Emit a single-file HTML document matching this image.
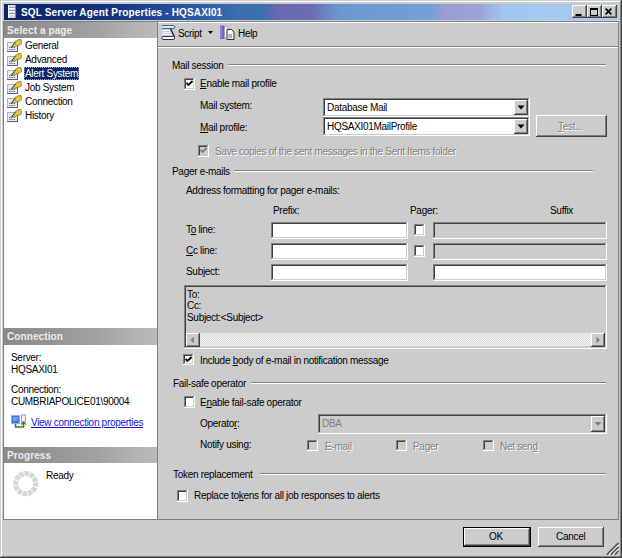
<!DOCTYPE html><html><head><meta charset="utf-8"><style>
html,body{margin:0;padding:0;}
body{width:622px;height:558px;position:relative;overflow:hidden;background:#cccccc;font-family:'Liberation Sans', sans-serif;}
.t{position:absolute;white-space:nowrap;font-family:'Liberation Sans', sans-serif;font-size:10px;line-height:12px;}
u{text-decoration:underline;}
</style></head><body>
<div style="position:absolute;left:0px;top:0px;width:622px;height:558px;background:#404040"></div>
<div style="position:absolute;left:0px;top:0px;width:621px;height:557px;background:#cccccc"></div>
<div style="position:absolute;left:1px;top:1px;width:620px;height:556px;background:#808080"></div>
<div style="position:absolute;left:1px;top:1px;width:619px;height:555px;background:#ffffff"></div>
<div style="position:absolute;left:2px;top:2px;width:618px;height:554px;background:#cccccc"></div>
<div style="position:absolute;left:4px;top:4px;width:614px;height:16px;background:linear-gradient(to right,#0a246a 0px,#12307c 96px,#2650a0 176px,#3a70b0 236px,#3a70b0 258px,#6a68b0 275px,#6a6cb4 306px,#6a98d0 336px,#72a0d6 426px,#9a9cd2 440px,#9ca4d6 476px,#a0c8f0 500px,#a6caf0 614px)"></div>
<div class="t" style="left:21px;top:7px;color:#fff;font-weight:bold;font-size:10px;letter-spacing:0.15px;">SQL Server Agent Properties - HQSAXI01</div>
<svg style="position:absolute;left:8px;top:5px" width="9" height="14"><rect x="0" y="0" width="8" height="13" fill="#d8d8e8"/><path d="M0.5 0v13" stroke="#f8f8ff"/><path d="M7.5 0v13" stroke="#8080a0"/><path d="M1 2.5h6M1 5.5h6M1 8.5h6" stroke="#9898b8"/><path d="M1 3.5h6M1 6.5h6M1 9.5h6" stroke="#ffffff"/></svg>
<div style="position:absolute;left:572px;top:5px;width:15px;height:13px;background:#404040"></div>
<div style="position:absolute;left:572px;top:5px;width:14px;height:12px;background:#ffffff"></div>
<div style="position:absolute;left:573px;top:6px;width:13px;height:11px;background:#808080"></div>
<div style="position:absolute;left:573px;top:6px;width:12px;height:10px;background:#cccccc"></div>
<div style="position:absolute;left:587px;top:5px;width:15px;height:13px;background:#404040"></div>
<div style="position:absolute;left:587px;top:5px;width:14px;height:12px;background:#ffffff"></div>
<div style="position:absolute;left:588px;top:6px;width:13px;height:11px;background:#808080"></div>
<div style="position:absolute;left:588px;top:6px;width:12px;height:10px;background:#cccccc"></div>
<div style="position:absolute;left:602px;top:5px;width:15px;height:13px;background:#404040"></div>
<div style="position:absolute;left:602px;top:5px;width:14px;height:12px;background:#ffffff"></div>
<div style="position:absolute;left:603px;top:6px;width:13px;height:11px;background:#808080"></div>
<div style="position:absolute;left:603px;top:6px;width:12px;height:10px;background:#cccccc"></div>
<svg style="position:absolute;left:572px;top:5px" width="46" height="13"><rect x="3.5" y="9" width="6" height="2" fill="#000"/><rect x="18.5" y="3.5" width="7" height="7" fill="none" stroke="#000" stroke-width="1"/><rect x="18" y="3" width="8" height="2" fill="#000"/><path d="M33.6 3.6 L39.4 9.4 M39.4 3.6 L33.6 9.4" stroke="#000" stroke-width="1.6"/></svg>
<div style="position:absolute;left:3px;top:21px;width:616px;height:1px;background:#808080"></div>
<div style="position:absolute;left:3px;top:519px;width:616px;height:1px;background:#808080"></div>
<div style="position:absolute;left:3px;top:21px;width:1px;height:499px;background:#808080"></div>
<div style="position:absolute;left:157px;top:21px;width:1px;height:499px;background:#808080"></div>
<div style="position:absolute;left:618px;top:21px;width:1px;height:499px;background:#808080"></div>
<div style="position:absolute;left:4px;top:22px;width:153px;height:497px;background:#ffffff"></div>
<div style="position:absolute;left:4px;top:22px;width:153px;height:16px;background:linear-gradient(to right,#8a8a8a 0%,#949494 30%,#a2a2a2 62%,#b2b2b2 84%,#bababa 100%)"></div>
<div class="t" style="left:7px;top:25px;color:#ececec;font-weight:bold;font-size:10px;letter-spacing:0.1px;">Select a page</div>
<svg style="position:absolute;left:7px;top:39px" width="15" height="13"><rect x="0" y="3" width="11" height="10" fill="#e6eaf2"/><path d="M0.5 12.5V3.5H10.5" stroke="#aab2c2" fill="none"/><path d="M0 12.5h11M10.5 3v10" stroke="#586070"/><path d="M2 8.5h6M2 10.5h6" stroke="#6078b0" stroke-dasharray="1.5 0.8"/><path d="M5 7.5 L8.5 2.5 Q10.5 0.3 14 0.5 L14.5 4.5 Q13 6.5 10 6.5 L7.5 8z" fill="#e4c440" stroke="#907420" stroke-width="0.8"/><path d="M4 8.5 L9 2.5" stroke="#282828" stroke-width="1.2" stroke-dasharray="1 0.9"/></svg>
<div class="t" style="left:25px;top:40px;color:#000;font-weight:normal;font-size:10px;letter-spacing:-0.3px;">General</div>
<svg style="position:absolute;left:7px;top:53px" width="15" height="13"><rect x="0" y="3" width="11" height="10" fill="#e6eaf2"/><path d="M0.5 12.5V3.5H10.5" stroke="#aab2c2" fill="none"/><path d="M0 12.5h11M10.5 3v10" stroke="#586070"/><path d="M2 8.5h6M2 10.5h6" stroke="#6078b0" stroke-dasharray="1.5 0.8"/><path d="M5 7.5 L8.5 2.5 Q10.5 0.3 14 0.5 L14.5 4.5 Q13 6.5 10 6.5 L7.5 8z" fill="#e4c440" stroke="#907420" stroke-width="0.8"/><path d="M4 8.5 L9 2.5" stroke="#282828" stroke-width="1.2" stroke-dasharray="1 0.9"/></svg>
<div class="t" style="left:25px;top:54px;color:#000;font-weight:normal;font-size:10px;letter-spacing:-0.3px;">Advanced</div>
<svg style="position:absolute;left:7px;top:67px" width="15" height="13"><rect x="0" y="3" width="11" height="10" fill="#e6eaf2"/><path d="M0.5 12.5V3.5H10.5" stroke="#aab2c2" fill="none"/><path d="M0 12.5h11M10.5 3v10" stroke="#586070"/><path d="M2 8.5h6M2 10.5h6" stroke="#6078b0" stroke-dasharray="1.5 0.8"/><path d="M5 7.5 L8.5 2.5 Q10.5 0.3 14 0.5 L14.5 4.5 Q13 6.5 10 6.5 L7.5 8z" fill="#e4c440" stroke="#907420" stroke-width="0.8"/><path d="M4 8.5 L9 2.5" stroke="#282828" stroke-width="1.2" stroke-dasharray="1 0.9"/></svg>
<div style="position:absolute;left:24px;top:67px;width:55px;height:13px;background:#0a246a"></div>
<div style="position:absolute;left:24px;top:67px;width:53px;height:11px;border:1px dotted #a0a8c0"></div>
<div class="t" style="left:25px;top:68px;color:#fff;font-weight:normal;font-size:10px;letter-spacing:-0.3px;">Alert System</div>
<svg style="position:absolute;left:7px;top:81px" width="15" height="13"><rect x="0" y="3" width="11" height="10" fill="#e6eaf2"/><path d="M0.5 12.5V3.5H10.5" stroke="#aab2c2" fill="none"/><path d="M0 12.5h11M10.5 3v10" stroke="#586070"/><path d="M2 8.5h6M2 10.5h6" stroke="#6078b0" stroke-dasharray="1.5 0.8"/><path d="M5 7.5 L8.5 2.5 Q10.5 0.3 14 0.5 L14.5 4.5 Q13 6.5 10 6.5 L7.5 8z" fill="#e4c440" stroke="#907420" stroke-width="0.8"/><path d="M4 8.5 L9 2.5" stroke="#282828" stroke-width="1.2" stroke-dasharray="1 0.9"/></svg>
<div class="t" style="left:25px;top:82px;color:#000;font-weight:normal;font-size:10px;letter-spacing:-0.3px;">Job System</div>
<svg style="position:absolute;left:7px;top:95px" width="15" height="13"><rect x="0" y="3" width="11" height="10" fill="#e6eaf2"/><path d="M0.5 12.5V3.5H10.5" stroke="#aab2c2" fill="none"/><path d="M0 12.5h11M10.5 3v10" stroke="#586070"/><path d="M2 8.5h6M2 10.5h6" stroke="#6078b0" stroke-dasharray="1.5 0.8"/><path d="M5 7.5 L8.5 2.5 Q10.5 0.3 14 0.5 L14.5 4.5 Q13 6.5 10 6.5 L7.5 8z" fill="#e4c440" stroke="#907420" stroke-width="0.8"/><path d="M4 8.5 L9 2.5" stroke="#282828" stroke-width="1.2" stroke-dasharray="1 0.9"/></svg>
<div class="t" style="left:25px;top:96px;color:#000;font-weight:normal;font-size:10px;letter-spacing:-0.3px;">Connection</div>
<svg style="position:absolute;left:7px;top:109px" width="15" height="13"><rect x="0" y="3" width="11" height="10" fill="#e6eaf2"/><path d="M0.5 12.5V3.5H10.5" stroke="#aab2c2" fill="none"/><path d="M0 12.5h11M10.5 3v10" stroke="#586070"/><path d="M2 8.5h6M2 10.5h6" stroke="#6078b0" stroke-dasharray="1.5 0.8"/><path d="M5 7.5 L8.5 2.5 Q10.5 0.3 14 0.5 L14.5 4.5 Q13 6.5 10 6.5 L7.5 8z" fill="#e4c440" stroke="#907420" stroke-width="0.8"/><path d="M4 8.5 L9 2.5" stroke="#282828" stroke-width="1.2" stroke-dasharray="1 0.9"/></svg>
<div class="t" style="left:25px;top:110px;color:#000;font-weight:normal;font-size:10px;letter-spacing:-0.3px;">History</div>
<div style="position:absolute;left:4px;top:328px;width:153px;height:17px;background:linear-gradient(to right,#8a8a8a 0%,#949494 30%,#a2a2a2 62%,#b2b2b2 84%,#bababa 100%)"></div>
<div class="t" style="left:7px;top:331px;color:#ececec;font-weight:bold;font-size:10px;letter-spacing:0.1px;">Connection</div>
<div class="t" style="left:11px;top:352px;color:#000;font-weight:normal;font-size:10px;letter-spacing:-0.3px;">Server:</div>
<div class="t" style="left:11px;top:364px;color:#000;font-weight:normal;font-size:10px;letter-spacing:-0.3px;">HQSAXI01</div>
<div class="t" style="left:11px;top:384px;color:#000;font-weight:normal;font-size:10px;letter-spacing:-0.3px;">Connection:</div>
<div class="t" style="left:11px;top:396px;color:#000;font-weight:normal;font-size:10px;letter-spacing:-0.3px;">CUMBRIAPOLICE01\90004</div>
<svg style="position:absolute;left:11px;top:414px" width="16" height="15"><rect x="0.5" y="1.5" width="8" height="8" fill="#3a78e0" stroke="#90b0e8"/><path d="M2 4h5M2 6h4" stroke="#a0c8ff"/><rect x="10.5" y="1" width="4" height="7" fill="#f4f0f8" stroke="#a0a0b0"/><path d="M4.5 10 V13 H12.5 V8" stroke="#3a7a20" stroke-width="1.5" fill="none"/><path d="M10 10.5 L12.5 8 L15 10.5" stroke="#3a7a20" stroke-width="1.2" fill="none"/></svg>
<div class="t" style="left:31px;top:417px;color:#1414d0;font-weight:normal;font-size:10px;letter-spacing:-0.3px;"><u>View connection properties</u></div>
<div style="position:absolute;left:4px;top:447px;width:153px;height:16px;background:linear-gradient(to right,#8a8a8a 0%,#949494 30%,#a2a2a2 62%,#b2b2b2 84%,#bababa 100%)"></div>
<div class="t" style="left:7px;top:450px;color:#ececec;font-weight:bold;font-size:10px;letter-spacing:0.1px;">Progress</div>
<svg style="position:absolute;left:13px;top:471px" width="26" height="26"><circle cx="12.7" cy="12.7" r="10" fill="none" stroke="#d6d6d6" stroke-width="5.2" stroke-dasharray="4.3 0.93" transform="rotate(-8 12.7 12.7)"/></svg>
<div class="t" style="left:46px;top:470px;color:#000;font-weight:normal;font-size:10px;letter-spacing:-0.3px;">Ready</div>
<div style="position:absolute;left:158px;top:22px;width:460px;height:1px;background:#ffffff"></div>
<div style="position:absolute;left:158px;top:46px;width:460px;height:1px;background:#808080"></div>
<div style="position:absolute;left:158px;top:47px;width:460px;height:1px;background:#ffffff"></div>
<svg style="position:absolute;left:160px;top:24px" width="17" height="17"><path d="M2 4.5 H10.5 L14.5 13 H2z" fill="#c4d0e6"/><path d="M2.5 6.5h7M2.5 8.5h8M2.5 10.5h9" stroke="#f4f8ff" stroke-width="1"/><path d="M2 1.5 H13 Q15 1.5 15 3 Q15 4.5 13 4.5 H2" fill="#dde4f0" stroke="#5a6478" stroke-width="1"/><path d="M10.5 4.5 L14.5 13" stroke="#202830" stroke-width="1.4"/><path d="M2.5 12.5 H14 Q15.5 14 14 15.5 H2.5 Q1 14 2.5 12.5z" fill="#ffffff" stroke="#303848" stroke-width="1"/></svg>
<div class="t" style="left:178px;top:28px;color:#000;font-weight:normal;font-size:10px;letter-spacing:-0.3px;">Script</div>
<svg style="position:absolute;left:208px;top:31px" width="6" height="4"><path d="M0 0h5l-2.5 3z" fill="#000"/></svg>
<svg style="position:absolute;left:219px;top:24px" width="17" height="17"><path d="M1 1.5 h4.5 v13.5 h-4.5z" fill="#6c64cc"/><path d="M2 2v12" stroke="#a8a4f0" stroke-width="1"/><path d="M5.5 3 h3.5 v11 h-3.5z" fill="#ffffff" stroke="#9a98b8" stroke-width="0.8"/><path d="M8 5.5 h4.5 l2.5 2.5 v7.5 h-7z" fill="#f2f4f8" stroke="#283038" stroke-width="1"/><path d="M9.5 11h3.5M9.5 13h3.5" stroke="#606878"/></svg>
<div class="t" style="left:238px;top:28px;color:#000;font-weight:normal;font-size:10px;letter-spacing:-0.3px;">Help</div>
<div class="t" style="left:172px;top:60px;color:#000;font-weight:normal;font-size:10px;letter-spacing:-0.3px;">Mail session</div>
<div style="position:absolute;left:228px;top:64px;width:378px;height:1px;background:#808080"></div>
<div style="position:absolute;left:228px;top:65px;width:378px;height:1px;background:#ffffff"></div>
<div style="position:absolute;left:184px;top:78px;width:11px;height:12px;background:#ffffff"></div>
<div style="position:absolute;left:184px;top:78px;width:10px;height:11px;background:#808080"></div>
<div style="position:absolute;left:185px;top:79px;width:9px;height:10px;background:#cccccc"></div>
<div style="position:absolute;left:185px;top:79px;width:8px;height:9px;background:#404040"></div>
<div style="position:absolute;left:186px;top:80px;width:7px;height:8px;background:#fff"></div>
<svg style="position:absolute;left:184px;top:78px" width="11" height="12"><path d="M2.5 5 L4.5 7 L8.5 3" stroke="#000" stroke-width="1.8" fill="none"/></svg>
<div class="t" style="left:200px;top:78px;color:#000;font-weight:normal;font-size:10px;letter-spacing:-0.3px;"><u>E</u>nable mail profile</div>
<div class="t" style="left:200px;top:100px;color:#000;font-weight:normal;font-size:10px;letter-spacing:-0.3px;">Mail s<u>y</u>stem:</div>
<div class="t" style="left:200px;top:122px;color:#000;font-weight:normal;font-size:10px;letter-spacing:-0.3px;"><u>M</u>ail profile:</div>
<div style="position:absolute;left:323px;top:98px;width:207px;height:19px;background:#ffffff"></div>
<div style="position:absolute;left:323px;top:98px;width:206px;height:18px;background:#808080"></div>
<div style="position:absolute;left:324px;top:99px;width:205px;height:17px;background:#cccccc"></div>
<div style="position:absolute;left:324px;top:99px;width:204px;height:16px;background:#404040"></div>
<div style="position:absolute;left:325px;top:100px;width:203px;height:15px;background:#fff"></div>
<div class="t" style="left:327px;top:102px;color:#000;font-weight:normal;font-size:10px;letter-spacing:-0.3px;">Database Mail</div>
<div style="position:absolute;left:514px;top:100px;width:14px;height:15px;background:#404040"></div>
<div style="position:absolute;left:514px;top:100px;width:13px;height:14px;background:#ffffff"></div>
<div style="position:absolute;left:515px;top:101px;width:12px;height:13px;background:#808080"></div>
<div style="position:absolute;left:515px;top:101px;width:11px;height:12px;background:#cccccc"></div>
<svg style="position:absolute;left:514px;top:100px;overflow:visible" width="14" height="15"><path d="M3.5 5.5 h7 l-3.5 4z" fill="#000"/></svg>
<div style="position:absolute;left:323px;top:117px;width:207px;height:19px;background:#ffffff"></div>
<div style="position:absolute;left:323px;top:117px;width:206px;height:18px;background:#808080"></div>
<div style="position:absolute;left:324px;top:118px;width:205px;height:17px;background:#cccccc"></div>
<div style="position:absolute;left:324px;top:118px;width:204px;height:16px;background:#404040"></div>
<div style="position:absolute;left:325px;top:119px;width:203px;height:15px;background:#fff"></div>
<div class="t" style="left:327px;top:121px;color:#000;font-weight:normal;font-size:10px;letter-spacing:-0.3px;">HQSAXI01MailProfile</div>
<div style="position:absolute;left:514px;top:119px;width:14px;height:15px;background:#404040"></div>
<div style="position:absolute;left:514px;top:119px;width:13px;height:14px;background:#ffffff"></div>
<div style="position:absolute;left:515px;top:120px;width:12px;height:13px;background:#808080"></div>
<div style="position:absolute;left:515px;top:120px;width:11px;height:12px;background:#cccccc"></div>
<svg style="position:absolute;left:514px;top:119px;overflow:visible" width="14" height="15"><path d="M3.5 5.5 h7 l-3.5 4z" fill="#000"/></svg>
<div style="position:absolute;left:536px;top:115px;width:71px;height:22px;background:#404040"></div>
<div style="position:absolute;left:536px;top:115px;width:70px;height:21px;background:#ffffff"></div>
<div style="position:absolute;left:537px;top:116px;width:69px;height:20px;background:#808080"></div>
<div style="position:absolute;left:537px;top:116px;width:68px;height:19px;background:#cccccc"></div>
<div class="t" style="left:558px;top:121px;color:#808080;font-weight:normal;font-size:10px;letter-spacing:-0.3px;text-shadow:1px 1px 0 #fff"><u>T</u>est...</div>
<div style="position:absolute;left:198px;top:145px;width:11px;height:12px;background:#ffffff"></div>
<div style="position:absolute;left:198px;top:145px;width:10px;height:11px;background:#808080"></div>
<div style="position:absolute;left:199px;top:146px;width:9px;height:10px;background:#cccccc"></div>
<div style="position:absolute;left:199px;top:146px;width:8px;height:9px;background:#404040"></div>
<div style="position:absolute;left:200px;top:147px;width:7px;height:8px;background:#cccccc"></div>
<svg style="position:absolute;left:198px;top:145px" width="11" height="12"><path d="M2.5 5 L4.5 7 L8.5 3" stroke="#808080" stroke-width="1.8" fill="none"/></svg>
<div class="t" style="left:215px;top:146px;color:#808080;font-weight:normal;font-size:10px;letter-spacing:-0.3px;text-shadow:1px 1px 0 #fff">Save copies of the sent messages in the Sent Items folder</div>
<div class="t" style="left:172px;top:166px;color:#000;font-weight:normal;font-size:10px;letter-spacing:-0.3px;">Pager e-mails</div>
<div style="position:absolute;left:234px;top:170px;width:359px;height:1px;background:#808080"></div>
<div style="position:absolute;left:234px;top:171px;width:359px;height:1px;background:#ffffff"></div>
<div class="t" style="left:186px;top:185px;color:#000;font-weight:normal;font-size:10px;letter-spacing:-0.3px;">Address formatting for pager e-mails:</div>
<div class="t" style="left:273px;top:205px;color:#000;font-weight:normal;font-size:10px;letter-spacing:-0.3px;">Prefix:</div>
<div class="t" style="left:410px;top:205px;color:#000;font-weight:normal;font-size:10px;letter-spacing:-0.3px;">Pager:</div>
<div class="t" style="left:550px;top:205px;color:#000;font-weight:normal;font-size:10px;letter-spacing:-0.3px;">Suffix</div>
<div class="t" style="left:186px;top:224px;color:#000;font-weight:normal;font-size:10px;letter-spacing:-0.3px;">T<u>o</u> line:</div>
<div class="t" style="left:186px;top:245px;color:#000;font-weight:normal;font-size:10px;letter-spacing:-0.3px;"><u>C</u>c line:</div>
<div class="t" style="left:186px;top:266px;color:#000;font-weight:normal;font-size:10px;letter-spacing:-0.3px;">Subject:</div>
<div style="position:absolute;left:271px;top:222px;width:137px;height:17px;background:#ffffff"></div>
<div style="position:absolute;left:271px;top:222px;width:136px;height:16px;background:#808080"></div>
<div style="position:absolute;left:272px;top:223px;width:135px;height:15px;background:#cccccc"></div>
<div style="position:absolute;left:272px;top:223px;width:134px;height:14px;background:#404040"></div>
<div style="position:absolute;left:273px;top:224px;width:133px;height:13px;background:#fff"></div>
<div style="position:absolute;left:433px;top:222px;width:174px;height:17px;background:#ffffff"></div>
<div style="position:absolute;left:433px;top:222px;width:173px;height:16px;background:#808080"></div>
<div style="position:absolute;left:434px;top:223px;width:172px;height:15px;background:#cccccc"></div>
<div style="position:absolute;left:434px;top:223px;width:171px;height:14px;background:#404040"></div>
<div style="position:absolute;left:435px;top:224px;width:170px;height:13px;background:#cccccc"></div>
<div style="position:absolute;left:271px;top:243px;width:137px;height:17px;background:#ffffff"></div>
<div style="position:absolute;left:271px;top:243px;width:136px;height:16px;background:#808080"></div>
<div style="position:absolute;left:272px;top:244px;width:135px;height:15px;background:#cccccc"></div>
<div style="position:absolute;left:272px;top:244px;width:134px;height:14px;background:#404040"></div>
<div style="position:absolute;left:273px;top:245px;width:133px;height:13px;background:#fff"></div>
<div style="position:absolute;left:433px;top:243px;width:174px;height:17px;background:#ffffff"></div>
<div style="position:absolute;left:433px;top:243px;width:173px;height:16px;background:#808080"></div>
<div style="position:absolute;left:434px;top:244px;width:172px;height:15px;background:#cccccc"></div>
<div style="position:absolute;left:434px;top:244px;width:171px;height:14px;background:#404040"></div>
<div style="position:absolute;left:435px;top:245px;width:170px;height:13px;background:#cccccc"></div>
<div style="position:absolute;left:271px;top:264px;width:137px;height:17px;background:#ffffff"></div>
<div style="position:absolute;left:271px;top:264px;width:136px;height:16px;background:#808080"></div>
<div style="position:absolute;left:272px;top:265px;width:135px;height:15px;background:#cccccc"></div>
<div style="position:absolute;left:272px;top:265px;width:134px;height:14px;background:#404040"></div>
<div style="position:absolute;left:273px;top:266px;width:133px;height:13px;background:#fff"></div>
<div style="position:absolute;left:433px;top:264px;width:174px;height:17px;background:#ffffff"></div>
<div style="position:absolute;left:433px;top:264px;width:173px;height:16px;background:#808080"></div>
<div style="position:absolute;left:434px;top:265px;width:172px;height:15px;background:#cccccc"></div>
<div style="position:absolute;left:434px;top:265px;width:171px;height:14px;background:#404040"></div>
<div style="position:absolute;left:435px;top:266px;width:170px;height:13px;background:#fff"></div>
<div style="position:absolute;left:414px;top:224px;width:11px;height:12px;background:#ffffff"></div>
<div style="position:absolute;left:414px;top:224px;width:10px;height:11px;background:#808080"></div>
<div style="position:absolute;left:415px;top:225px;width:9px;height:10px;background:#cccccc"></div>
<div style="position:absolute;left:415px;top:225px;width:8px;height:9px;background:#404040"></div>
<div style="position:absolute;left:416px;top:226px;width:7px;height:8px;background:#fff"></div>
<div style="position:absolute;left:414px;top:245px;width:11px;height:12px;background:#ffffff"></div>
<div style="position:absolute;left:414px;top:245px;width:10px;height:11px;background:#808080"></div>
<div style="position:absolute;left:415px;top:246px;width:9px;height:10px;background:#cccccc"></div>
<div style="position:absolute;left:415px;top:246px;width:8px;height:9px;background:#404040"></div>
<div style="position:absolute;left:416px;top:247px;width:7px;height:8px;background:#fff"></div>
<div style="position:absolute;left:184px;top:285px;width:423px;height:64px;background:#ffffff"></div>
<div style="position:absolute;left:184px;top:285px;width:422px;height:63px;background:#808080"></div>
<div style="position:absolute;left:185px;top:286px;width:421px;height:62px;background:#cccccc"></div>
<div style="position:absolute;left:185px;top:286px;width:420px;height:61px;background:#404040"></div>
<div style="position:absolute;left:186px;top:287px;width:419px;height:60px;background:#cccccc"></div>
<div class="t" style="left:187px;top:289px;color:#000;font-weight:normal;font-size:10px;letter-spacing:-0.3px;">To:</div>
<div class="t" style="left:187px;top:300px;color:#000;font-weight:normal;font-size:10px;letter-spacing:-0.3px;">Cc:</div>
<div class="t" style="left:187px;top:312px;color:#000;font-weight:normal;font-size:10px;letter-spacing:-0.3px;">Subject:&lt;Subject&gt;</div>
<div style="position:absolute;left:186px;top:333px;width:419px;height:13px;background-color:#fff;background-image:repeating-conic-gradient(#d8d8d8 0 25%, #f6f6f6 0 50%);background-size:2px 2px"></div>
<div style="position:absolute;left:186px;top:333px;width:14px;height:14px;background:#404040"></div>
<div style="position:absolute;left:186px;top:333px;width:13px;height:13px;background:#ffffff"></div>
<div style="position:absolute;left:187px;top:334px;width:12px;height:12px;background:#808080"></div>
<div style="position:absolute;left:187px;top:334px;width:11px;height:11px;background:#cccccc"></div>
<div style="position:absolute;left:591px;top:333px;width:14px;height:14px;background:#404040"></div>
<div style="position:absolute;left:591px;top:333px;width:13px;height:13px;background:#ffffff"></div>
<div style="position:absolute;left:592px;top:334px;width:12px;height:12px;background:#808080"></div>
<div style="position:absolute;left:592px;top:334px;width:11px;height:11px;background:#cccccc"></div>
<svg style="position:absolute;left:186px;top:333px" width="14" height="14"><path d="M8 3.5 v7 l-3.5 -3.5z" fill="#808080"/></svg>
<svg style="position:absolute;left:591px;top:333px" width="14" height="14"><path d="M5.5 3.5 v7 l3.5 -3.5z" fill="#808080"/></svg>
<div style="position:absolute;left:183px;top:354px;width:11px;height:11px;background:#ffffff"></div>
<div style="position:absolute;left:183px;top:354px;width:10px;height:10px;background:#808080"></div>
<div style="position:absolute;left:184px;top:355px;width:9px;height:9px;background:#cccccc"></div>
<div style="position:absolute;left:184px;top:355px;width:8px;height:8px;background:#404040"></div>
<div style="position:absolute;left:185px;top:356px;width:7px;height:7px;background:#fff"></div>
<svg style="position:absolute;left:183px;top:354px" width="11" height="11"><path d="M2.5 5 L4.5 7 L8.5 3" stroke="#000" stroke-width="1.8" fill="none"/></svg>
<div class="t" style="left:200px;top:355px;color:#000;font-weight:normal;font-size:10px;letter-spacing:-0.3px;">Include <u>b</u>ody of e-mail in notification message</div>
<div class="t" style="left:173px;top:378px;color:#000;font-weight:normal;font-size:10px;letter-spacing:-0.3px;">Fail-safe operator</div>
<div style="position:absolute;left:251px;top:382px;width:355px;height:1px;background:#808080"></div>
<div style="position:absolute;left:251px;top:383px;width:355px;height:1px;background:#ffffff"></div>
<div style="position:absolute;left:184px;top:396px;width:11px;height:12px;background:#ffffff"></div>
<div style="position:absolute;left:184px;top:396px;width:10px;height:11px;background:#808080"></div>
<div style="position:absolute;left:185px;top:397px;width:9px;height:10px;background:#cccccc"></div>
<div style="position:absolute;left:185px;top:397px;width:8px;height:9px;background:#404040"></div>
<div style="position:absolute;left:186px;top:398px;width:7px;height:8px;background:#fff"></div>
<div class="t" style="left:200px;top:397px;color:#000;font-weight:normal;font-size:10px;letter-spacing:-0.3px;">E<u>n</u>able fail-safe operator</div>
<div class="t" style="left:200px;top:418px;color:#000;font-weight:normal;font-size:10px;letter-spacing:-0.3px;">Operato<u>r</u>:</div>
<div class="t" style="left:200px;top:439px;color:#000;font-weight:normal;font-size:10px;letter-spacing:-0.3px;">Notify using:</div>
<div style="position:absolute;left:318px;top:414px;width:289px;height:20px;background:#ffffff"></div>
<div style="position:absolute;left:318px;top:414px;width:288px;height:19px;background:#808080"></div>
<div style="position:absolute;left:319px;top:415px;width:287px;height:18px;background:#cccccc"></div>
<div style="position:absolute;left:319px;top:415px;width:286px;height:17px;background:#404040"></div>
<div style="position:absolute;left:320px;top:416px;width:285px;height:16px;background:#cccccc"></div>
<div class="t" style="left:322px;top:418px;color:#808080;font-weight:normal;font-size:10px;letter-spacing:-0.3px;">DBA</div>
<div style="position:absolute;left:591px;top:416px;width:14px;height:16px;background:#404040"></div>
<div style="position:absolute;left:591px;top:416px;width:13px;height:15px;background:#ffffff"></div>
<div style="position:absolute;left:592px;top:417px;width:12px;height:14px;background:#808080"></div>
<div style="position:absolute;left:592px;top:417px;width:11px;height:13px;background:#cccccc"></div>
<svg style="position:absolute;left:591px;top:416px;overflow:visible" width="14" height="16"><path d="M3.5 6.0 h7 l-3.5 4z" fill="#808080"/></svg>
<div style="position:absolute;left:307px;top:440px;width:11px;height:11px;background:#ffffff"></div>
<div style="position:absolute;left:307px;top:440px;width:10px;height:10px;background:#808080"></div>
<div style="position:absolute;left:308px;top:441px;width:9px;height:9px;background:#cccccc"></div>
<div style="position:absolute;left:308px;top:441px;width:8px;height:8px;background:#404040"></div>
<div style="position:absolute;left:309px;top:442px;width:7px;height:7px;background:#cccccc"></div>
<div class="t" style="left:325px;top:441px;color:#808080;font-weight:normal;font-size:10px;letter-spacing:-0.3px;text-shadow:1px 1px 0 #fff">E-ma<u>i</u>l</div>
<div style="position:absolute;left:396px;top:440px;width:11px;height:11px;background:#ffffff"></div>
<div style="position:absolute;left:396px;top:440px;width:10px;height:10px;background:#808080"></div>
<div style="position:absolute;left:397px;top:441px;width:9px;height:9px;background:#cccccc"></div>
<div style="position:absolute;left:397px;top:441px;width:8px;height:8px;background:#404040"></div>
<div style="position:absolute;left:398px;top:442px;width:7px;height:7px;background:#cccccc"></div>
<div class="t" style="left:413px;top:441px;color:#808080;font-weight:normal;font-size:10px;letter-spacing:-0.3px;text-shadow:1px 1px 0 #fff">Pager</div>
<div style="position:absolute;left:483px;top:440px;width:11px;height:11px;background:#ffffff"></div>
<div style="position:absolute;left:483px;top:440px;width:10px;height:10px;background:#808080"></div>
<div style="position:absolute;left:484px;top:441px;width:9px;height:9px;background:#cccccc"></div>
<div style="position:absolute;left:484px;top:441px;width:8px;height:8px;background:#404040"></div>
<div style="position:absolute;left:485px;top:442px;width:7px;height:7px;background:#cccccc"></div>
<div class="t" style="left:500px;top:441px;color:#808080;font-weight:normal;font-size:10px;letter-spacing:-0.3px;text-shadow:1px 1px 0 #fff">Net sen<u>d</u></div>
<div class="t" style="left:173px;top:469px;color:#000;font-weight:normal;font-size:10px;letter-spacing:-0.3px;">Token replacement</div>
<div style="position:absolute;left:260px;top:473px;width:346px;height:1px;background:#808080"></div>
<div style="position:absolute;left:260px;top:474px;width:346px;height:1px;background:#ffffff"></div>
<div style="position:absolute;left:177px;top:490px;width:11px;height:12px;background:#ffffff"></div>
<div style="position:absolute;left:177px;top:490px;width:10px;height:11px;background:#808080"></div>
<div style="position:absolute;left:178px;top:491px;width:9px;height:10px;background:#cccccc"></div>
<div style="position:absolute;left:178px;top:491px;width:8px;height:9px;background:#404040"></div>
<div style="position:absolute;left:179px;top:492px;width:7px;height:8px;background:#fff"></div>
<div class="t" style="left:194px;top:490px;color:#000;font-weight:normal;font-size:10px;letter-spacing:-0.3px;">Replace to<u>k</u>ens for all job responses to alerts</div>
<div style="position:absolute;left:463px;top:527px;width:68px;height:20px;background:#000"></div>
<div style="position:absolute;left:464px;top:528px;width:66px;height:18px;background:#404040"></div>
<div style="position:absolute;left:464px;top:528px;width:65px;height:17px;background:#ffffff"></div>
<div style="position:absolute;left:465px;top:529px;width:64px;height:16px;background:#808080"></div>
<div style="position:absolute;left:465px;top:529px;width:63px;height:15px;background:#cccccc"></div>
<div class="t" style="left:489px;top:531px;color:#000;font-weight:normal;font-size:10px;letter-spacing:-0.3px;">OK</div>
<div style="position:absolute;left:538px;top:527px;width:66px;height:20px;background:#404040"></div>
<div style="position:absolute;left:538px;top:527px;width:65px;height:19px;background:#ffffff"></div>
<div style="position:absolute;left:539px;top:528px;width:64px;height:18px;background:#808080"></div>
<div style="position:absolute;left:539px;top:528px;width:63px;height:17px;background:#cccccc"></div>
<div class="t" style="left:556px;top:531px;color:#000;font-weight:normal;font-size:10px;letter-spacing:-0.3px;">Cancel</div>
<svg style="position:absolute;left:605px;top:541px" width="15" height="15"><g stroke-width="1.6" stroke-linecap="square"><path d="M13 2.5 L2.5 13" stroke="#505050"/><path d="M13 6.5 L6.5 13" stroke="#505050"/><path d="M13 10.5 L10.5 13" stroke="#505050"/><path d="M13 4.3 L4.3 13" stroke="#f8f8f8" stroke-width="1"/><path d="M13 8.3 L8.3 13" stroke="#f8f8f8" stroke-width="1"/></g></svg>
</body></html>
